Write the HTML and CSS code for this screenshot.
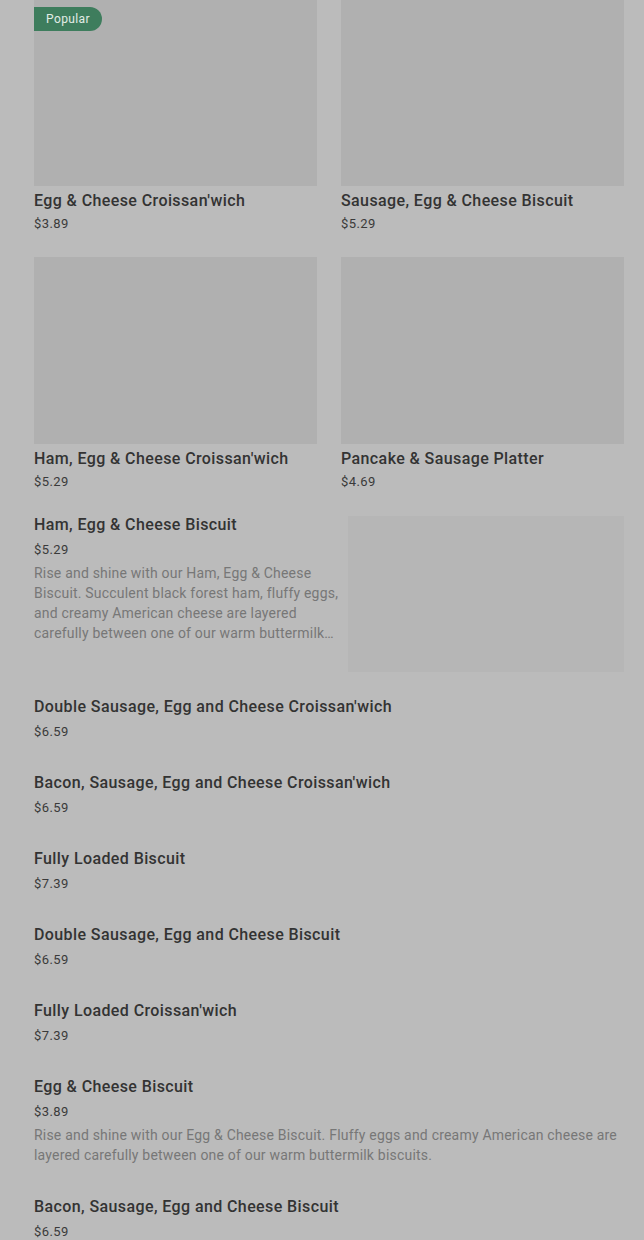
FILE: index.html
```html
<!DOCTYPE html>
<html>
<head>
<meta charset="utf-8">
<link rel="stylesheet" href="styles.css">
</head>
<body>
<main class="page">
  <section class="grid">
    <article class="card">
      <div class="thumb"><span class="badge">Popular</span></div>
      <h3 class="title">Egg &amp; Cheese Croissan'wich</h3>
      <div class="price">$3.89</div>
    </article>
    <article class="card">
      <div class="thumb"></div>
      <h3 class="title">Sausage, Egg &amp; Cheese Biscuit</h3>
      <div class="price">$5.29</div>
    </article>
    <article class="card">
      <div class="thumb"></div>
      <h3 class="title">Ham, Egg &amp; Cheese Croissan'wich</h3>
      <div class="price">$5.29</div>
    </article>
    <article class="card">
      <div class="thumb"></div>
      <h3 class="title">Pancake &amp; Sausage Platter</h3>
      <div class="price">$4.69</div>
    </article>
  </section>

  <section class="list">
    <article class="item item-img">
      <div class="item-text">
        <h3 class="title">Ham, Egg &amp; Cheese Biscuit</h3>
        <div class="price">$5.29</div>
        <p class="desc clamp">Rise and shine with our Ham, Egg &amp; Cheese Biscuit. Succulent black forest ham, fluffy eggs, and creamy American cheese are layered carefully between one of our warm buttermilk biscuits.</p>
      </div>
      <div class="item-thumb"></div>
    </article>
    <article class="item">
      <h3 class="title">Double Sausage, Egg and Cheese Croissan'wich</h3>
      <div class="price">$6.59</div>
    </article>
    <article class="item">
      <h3 class="title">Bacon, Sausage, Egg and Cheese Croissan'wich</h3>
      <div class="price">$6.59</div>
    </article>
    <article class="item">
      <h3 class="title">Fully Loaded Biscuit</h3>
      <div class="price">$7.39</div>
    </article>
    <article class="item">
      <h3 class="title">Double Sausage, Egg and Cheese Biscuit</h3>
      <div class="price">$6.59</div>
    </article>
    <article class="item">
      <h3 class="title">Fully Loaded Croissan'wich</h3>
      <div class="price">$7.39</div>
    </article>
    <article class="item">
      <h3 class="title">Egg &amp; Cheese Biscuit</h3>
      <div class="price">$3.89</div>
      <p class="desc">Rise and shine with our Egg &amp; Cheese Biscuit. Fluffy eggs and creamy American cheese are layered carefully between one of our warm buttermilk biscuits.</p>
    </article>
    <article class="item">
      <h3 class="title">Bacon, Sausage, Egg and Cheese Biscuit</h3>
      <div class="price">$6.59</div>
    </article>
  </section>
</main>
</body>
</html>
```

FILE: styles.css
```css
html, body {
  margin: 0;
  padding: 0;
  background: #bbbbbb;
}
body {
  font-family: Roboto, "Liberation Sans", sans-serif;
  color: #333333;
  overflow: hidden;
}
.page {
  padding: 0 20px 0 34px;
  margin-top: -1px;
}
.grid {
  display: grid;
  grid-template-columns: 283px 283px;
  column-gap: 24px;
  row-gap: 23px;
}
.card {
  display: flex;
  flex-direction: column;
}
.thumb {
  position: relative;
  height: 187px;
  background: #b0b0b0;
}
.badge {
  position: absolute;
  left: 0;
  top: 8px;
  height: 24px;
  line-height: 24px;
  padding: 0 12px;
  background: #3e7d5d;
  color: #e2ece6;
  font-size: 12px;
  letter-spacing: 0.4px;
  border-radius: 0 12px 12px 0;
}
.title {
  margin: 0;
  font-size: 16px;
  line-height: 20px;
  font-weight: 500;
  letter-spacing: 0.4px;
  color: #333333;
}
.card .title {
  margin-top: 5px;
}
.price {
  font-size: 13px;
  line-height: 20px;
  letter-spacing: 0.4px;
  color: #3a3a3a;
}
.card .price {
  margin-top: 3px;
}
.list {
  margin-top: 7px;
  display: flex;
  flex-direction: column;
}
.item {
  padding: 16px 0 15px;
}
.item .price {
  margin-top: 5px;
}
.item-img {
  display: flex;
  align-items: flex-start;
  gap: 8px;
  padding: 16px 0 9px;
}
.item-text {
  flex: 1;
  min-width: 0;
}
.item-thumb {
  flex: 0 0 276px;
  height: 156px;
  margin-top: 1px;
  background: #b6b6b6;
}
.desc {
  margin: 3px 0 1px;
  font-size: 14px;
  line-height: 20px;
  letter-spacing: 0.2px;
  color: #777777;
}
.clamp {
  display: -webkit-box;
  -webkit-line-clamp: 4;
  -webkit-box-orient: vertical;
  overflow: hidden;
}
```
